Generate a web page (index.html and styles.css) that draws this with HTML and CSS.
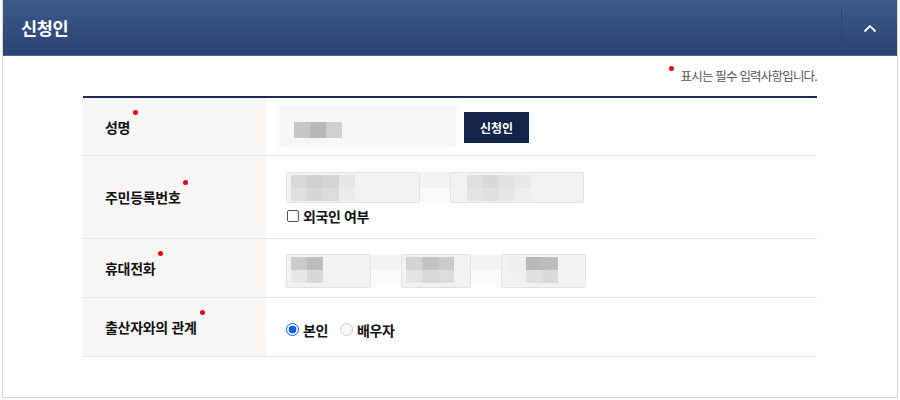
FILE: index.html
```html
<!DOCTYPE html>
<html lang="ko">
<head>
<meta charset="utf-8">
<link rel="stylesheet" href="styles.css">
</head>
<body>
<div class="panel">
  <div class="head">
    <h2 class="title">신청인</h2>
    <div class="toggle">
      <svg width="14" height="9" viewBox="0 0 14 9"><polyline points="1.5,7.5 7,2 12.5,7.5" fill="none" stroke="#fff" stroke-width="1.8"/></svg>
    </div>
  </div>
  <div class="body">
    <p class="note"><span class="req"></span>표시는 필수 입력사항입니다.</p>
    <div class="form">
      <div class="row r1">
        <div class="label"><span class="lt">성명<span class="req"></span></span></div>
        <div class="value inline">
          <div class="namefield"><div class="mosaic m-name"><i style="background:#c9c5c5"></i><i style="background:#b9b8b8"></i><i style="background:#d1d0d0"></i></div></div>
          <button class="btn">신청인</button>
        </div>
      </div>
      <div class="row r2">
        <div class="label"><span class="lt">주민등록번호<span class="req"></span></span></div>
        <div class="value stack">
          <div class="inputs">
            <div class="field f-jumin"><div class="mosaic grid2"><i style="background:#d9d9d9"></i><i style="background:#cfcfcf"></i><i style="background:#d5d5d5"></i><i style="background:#e6e6e6"></i><i style="background:#e0e0e0"></i><i style="background:#d6d6d6"></i><i style="background:#dcdcdc"></i><i style="background:#ebebeb"></i></div></div>
            <div class="dash"></div>
            <div class="field f-jumin"><div class="mosaic grid2 off"><i style="background:#e0e0e0"></i><i style="background:#d8d8d8"></i><i style="background:#e2e2e2"></i><i style="background:#e8e8e8"></i><i style="background:#e4e4e4"></i><i style="background:#dfdfdf"></i><i style="background:#e6e6e6"></i><i style="background:#eeeeee"></i></div></div>
          </div>
          <label class="check"><input type="checkbox"><span>외국인 여부</span></label>
        </div>
      </div>
      <div class="row r3">
        <div class="label"><span class="lt">휴대전화<span class="req"></span></span></div>
        <div class="value inline phone">
          <div class="inputs">
            <div class="field f-p1"><div class="mosaic grid2 p"><i style="background:#cacaca"></i><i style="background:#bdbdbd"></i><i style="background:#e6e6e6"></i><i style="background:#d8d8d8"></i></div></div>
            <div class="dash d2"></div>
            <div class="field f-p2"><div class="mosaic grid2 p3"><i style="background:#d6d4d2"></i><i style="background:#c3c3c3"></i><i style="background:#cbcbcb"></i><i style="background:#e4e4e4"></i><i style="background:#dadada"></i><i style="background:#dcdcdc"></i></div></div>
            <div class="dash d3"></div>
            <div class="field f-p3"><div class="mosaic grid2 p3 off2"><i style="background:#eeeeee"></i><i style="background:#b8b8b8"></i><i style="background:#bcbcbc"></i><i style="background:#f0f0f0"></i><i style="background:#e0e0e0"></i><i style="background:#dadada"></i></div></div>
          </div>
        </div>
      </div>
      <div class="row r4">
        <div class="label"><span class="lt">출산자와의 관계<span class="req"></span></span></div>
        <div class="value inline radios">
          <label class="radio"><input type="radio" name="rel" checked><span>본인</span></label>
          <label class="radio"><input type="radio" name="rel"><span>배우자</span></label>
        </div>
      </div>
    </div>
  </div>
</div>
</body>
</html>
```

FILE: styles.css
```css
* { box-sizing: border-box; }
html, body { margin: 0; padding: 0; background: #fff; }
body { font-family: "Noto Sans CJK KR", "Noto Sans", sans-serif; color: #111; }

.panel {
  margin: 0 2px;
  height: 398px;
  border: 1px solid #d6d6d6;
  border-top: 0;
}

.head {
  height: 56px;
  display: flex;
  align-items: center;
  background: linear-gradient(#3c5b8c, #2a4372);
  border-bottom: 1px solid #4b6794;
  padding-left: 18px;
}
.title {
  margin: 0;
  flex: 1;
  color: #fff;
  font-size: 17.5px;
  font-weight: 700;
  letter-spacing: -0.3px;
  line-height: 1;
}
.toggle {
  width: 56px;
  height: 40px;
  border-left: 1px solid #2c4574;
  display: flex;
  align-items: center;
  justify-content: center;
  padding-top: 2px;
}

.body { padding: 0 80px 0 80px; }

.note {
  margin: 10px 0 0;
  height: 30px;
  text-align: right;
  font-size: 12.5px;
  color: #555;
  letter-spacing: -0.8px;
  line-height: 20px;
}
.note .req { position: relative; top: 0px; margin-right: 7px; }

.req {
  display: inline-block;
  width: 5px;
  height: 5px;
  border-radius: 50%;
  background: #e60012;
  vertical-align: top;
}

.form { border-top: 2px solid #1e2c55; }

.row {
  display: grid;
  grid-template-columns: 183px 1fr;
  border-bottom: 1px solid #e6e6e6;
}
.r1 { height: 58px; }
.r2 { height: 83px; }
.r3 { height: 59px; }
.r4 { height: 59px; }

.label {
  background: #f8f7f6;
  display: flex;
  align-items: center;
  padding-left: 22px;
}
.lt {
  position: relative;
  font-size: 14px;
  font-weight: 700;
  letter-spacing: -0.3px;
}
.lt .req { position: absolute; right: -8px; top: -7px; }

.value { display: flex; padding-left: 20px; }
.inline { align-items: center; }
.stack { flex-direction: column; justify-content: flex-start; padding-top: 16px; gap: 3px; }

.namefield {
  width: 177px;
  height: 40px;
  margin-left: -7px;
  background: #f7f7f7;
  box-shadow: 0 0 4px 2px #fbfbfb;
  position: relative;
  margin-top: -2px;
}
.mosaic { display: flex; }
.mosaic i { display: block; width: 16px; height: 16px; }
.m-name { position: absolute; left: 15px; top: 16px; }
.btn {
  margin-left: 8px;
  width: 65px;
  height: 31px;
  background: #14234a;
  border: 0;
  color: #fff;
  font-family: inherit;
  font-size: 12px;
  font-weight: 700;
  margin-top: 2px;
}

.inputs { display: flex; align-items: center; }
.field {
  height: 31px;
  background: #f2f2f2;
  border: 1px solid #e2e2e2;
  border-radius: 2px;
  padding: 2px 4px;
}
.f-jumin { width: 134px; }
.dash { width: 30px; height: 31px; background: linear-gradient(#f4f4f4 50%, #fbfbfb 50%); }
.grid2 { flex-wrap: wrap; width: 64px; }
.grid2 i { height: 13px; }
.grid2.off { margin-left: 12px; }
.grid2.p { width: 32px; }
.grid2.p3 { width: 48px; }
.grid2.off2 { margin-left: 4px; }
.f-p1 { width: 85px; }
.f-p2 { width: 70px; }
.f-p3 { width: 85px; }
.d2 { width: 30px; }
.d3 { width: 30px; }
.r3 .field { height: 34px; }
.phone { padding-top: 5px; }

.check, .radio {
  display: flex;
  align-items: center;
  font-size: 14px;
  font-weight: 700;
  letter-spacing: -0.4px;
}
.check input {
  appearance: none;
  margin: 0 4px 0 1px;
  width: 12px;
  height: 12px;
  border: 1px solid #555;
  border-radius: 2px;
  background: #fff;
}
.radios { gap: 12px; padding-top: 5px; }
.radio input {
  appearance: none;
  margin: 0 4px 0 0;
  width: 13px;
  height: 13px;
  border-radius: 50%;
  border: 1px solid #c8c8c8;
  background: #fafafa;
}
.radio input:checked {
  border: 1px solid #0a5ff0;
  background: radial-gradient(circle, #0a5ff0 0 3.6px, #fff 4.2px);
}
```
